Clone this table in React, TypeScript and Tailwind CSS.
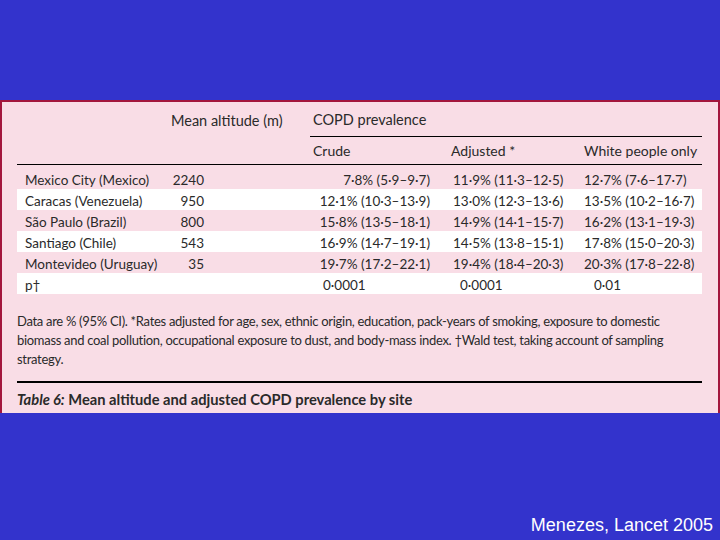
const rows = [
  { site: "Mexico City (Mexico)", alt: "2240", crude: "7·8% (5·9–9·7)", adj: "11·9% (11·3–12·5)", white: "12·7% (7·6–17·7)", shade: false },
  { site: "Caracas (Venezuela)", alt: "950", crude: "12·1% (10·3–13·9)", adj: "13·0% (12·3–13·6)", white: "13·5% (10·2–16·7)", shade: true },
  { site: "São Paulo (Brazil)", alt: "800", crude: "15·8% (13·5–18·1)", adj: "14·9% (14·1–15·7)", white: "16·2% (13·1–19·3)", shade: false },
  { site: "Santiago (Chile)", alt: "543", crude: "16·9% (14·7–19·1)", adj: "14·5% (13·8–15·1)", white: "17·8% (15·0–20·3)", shade: true },
  { site: "Montevideo (Uruguay)", alt: "35", crude: "19·7% (17·2–22·1)", adj: "19·4% (18·4–20·3)", white: "20·3% (17·8–22·8)", shade: false },
];

const cols = "grid grid-cols-[143px_55px_225px_135px_125px]";

export default function App() {
  return (
    <div className="flex h-[540px] w-[720px] flex-col bg-[#3333cc] pt-[100px] font-['Lato',sans-serif]">
      <div className="h-[313px] border-x-2 border-t-2 border-[#a3163d] bg-[#f9dde6] pl-[15px] pr-[16px] text-[#2a2a2a]">
        {/* header */}
        <div className="flex h-[35px] items-center pt-[2px] text-[14.5px]">
          <div className="w-[293px] pl-[154px]">Mean altitude (m)</div>
          <div className="flex h-full flex-1 items-center border-b-[1.5px] border-black pl-[3px]">COPD prevalence</div>
        </div>
        <div className={`${cols} h-[28px] items-center border-b-[1.5px] border-black text-[14px]`}>
          <div />
          <div />
          <div className="pl-[98px]">Crude</div>
          <div className="pl-[11px]">Adjusted *</div>
          <div className="pl-[9px]">White people only</div>
        </div>

        {/* rows */}
        <div className="mt-[3px] text-[13.5px]">
          {rows.map((r) => (
            <div key={r.site} className={`${cols} h-[21px] items-center pt-[2px] ${r.shade ? "bg-white" : ""}`}>
              <div className="pl-[8px] whitespace-nowrap">{r.site}</div>
              <div className="pr-[11px] text-right">{r.alt}</div>
              <div className="pr-[10px] text-right whitespace-nowrap">{r.crude}</div>
              <div className="pl-[13px] whitespace-nowrap">{r.adj}</div>
              <div className="pl-[9px] whitespace-nowrap">{r.white}</div>
            </div>
          ))}
          <div className={`${cols} h-[21px] items-center bg-white pt-[2px]`}>
            <div className="pl-[8px]">p†</div>
            <div />
            <div className="pl-[108px]">0·0001</div>
            <div className="pl-[20px]">0·0001</div>
            <div className="pl-[19px]">0·01</div>
          </div>
        </div>

        {/* footnote */}
        <p className="mt-[18px] text-[13px] leading-[19px] tracking-[-0.3px]">
          Data are % (95% CI). *Rates adjusted for age, sex, ethnic origin, education, pack-years of smoking, exposure to domestic
          <br />
          biomass and coal pollution, occupational exposure to dust, and body-mass index. †Wald test, taking account of sampling
          <br />
          strategy.
        </p>

        <div className="mt-[12px] border-t-2 border-black pt-[5px] text-[14.7px] font-bold">
          <span className="italic">Table 6:</span> Mean altitude and adjusted COPD prevalence by site
        </div>
      </div>

      <div className="flex flex-1 items-end justify-end pb-[4px] pr-[7px]">
        <span className="font-['Liberation_Sans',Arial,sans-serif] text-[18px] leading-[21px] text-white">Menezes, Lancet 2005</span>
      </div>
    </div>
  );
}
